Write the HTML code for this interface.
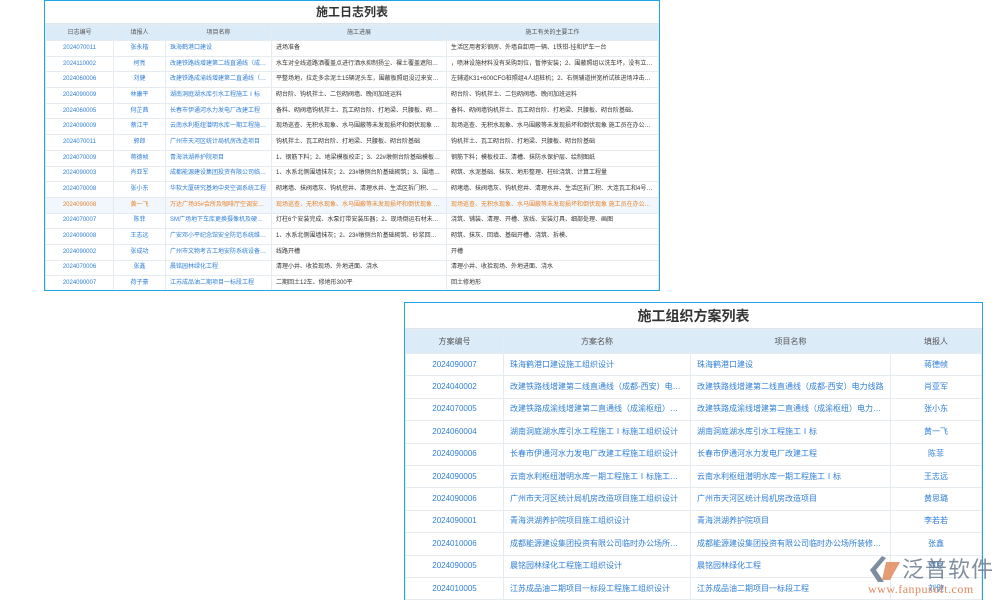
<!DOCTYPE html>
<html><head><meta charset="utf-8"><style>
*{margin:0;padding:0;box-sizing:border-box}
body{width:1000px;height:600px;background:#fff;position:relative;overflow:hidden;font-family:"Liberation Sans","Noto Sans CJK SC",sans-serif}
.t{position:absolute;border:1.5px solid #1fa5e6;background:#fff;overflow:hidden}
table{border-collapse:collapse;width:100%;table-layout:fixed}
td,th{border:1px solid #e6ebf0;white-space:nowrap;overflow:hidden;text-overflow:ellipsis;font-weight:normal;vertical-align:middle}
.title{text-align:center;font-weight:bold;color:#333;border-bottom:1px solid #dde6ee}
th{background:#dcebf8;color:#555}
.b{color:#2f7fd6}
.c{text-align:center}
.g{color:#333}
#t1{left:44px;top:0;width:616px;height:291px}
#t1 .title{height:23px;line-height:23px;font-size:12px}
#t1 th{height:16px;line-height:14px;font-size:6px}
#t1 td{height:15.7px;line-height:13px;font-size:6px;padding:0 4px}
#t1 tr.o td{color:#e8832a;background:#f1f7fd}
#t2{left:404px;top:302px;width:579px;height:298px;border-bottom:none}
#t2 .title{height:26px;line-height:26px;font-size:14px}
#t2 th{height:24px;line-height:20px;font-size:8px}
#t2 td{height:22.4px;line-height:18px;font-size:8px;padding:0 6px}
</style></head><body>
<div class="t" id="t1"><div class="title">施工日志列表</div>
<table><colgroup><col style="width:68px"><col style="width:52px"><col style="width:106px"><col style="width:175px"><col></colgroup>
<tr><th>日志编号</th><th>填报人</th><th>项目名称</th><th>施工进展</th><th>施工有关的主要工作</th></tr>
<tr><td class="b c">2024070011</td><td class="b c">张永楷</td><td class="b">珠海鹤港口建设</td><td class="g">进场准备</td><td class="g">生活区用者彩钢房、外墙自卸用一辆、1铁钳-挂和铲车一台</td></tr>
<tr><td class="b c">2024110002</td><td class="b c">柯亮</td><td class="b">改建铁路线增建第二线直通线（成都-西安）电力线</td><td class="g">水车对全线道路洒覆盖点进行洒水抑制扬尘、裸土覆盖遮阳网：2...</td><td class="g">，喷淋设施材料没有采购到位，暂停安装；2、围蔽照组以洗车坏，没有立柱为腰...</td></tr>
<tr><td class="b c">2024060006</td><td class="b c">刘健</td><td class="b">改建铁路成渝线增建第二直通线（成渝枢纽）</td><td class="g">平整场地，拉走多余泥土15辆泥头车，围蔽板照组没过来安装围蔽...</td><td class="g">左辅道K31+600CFG桩照组4人组桩机；2、右侧辅道拼宽桥试桩进场冲击钻一...</td></tr>
<tr><td class="b c">2024090009</td><td class="b c">林康平</td><td class="b">湖南洞庭湖水库引水工程施工Ⅰ标</td><td class="g">砌台阶、钩机拌土、二包砌阀墙、晚间加班运料</td><td class="g">砌台阶、钩机拌土、二包砌阀墙、晚间加班运料</td></tr>
<tr><td class="b c">2024060005</td><td class="b c">何芷茜</td><td class="b">长春市伊通河水力发电厂改建工程</td><td class="g">备料、砌阀墙钩机拌土、瓦工砌台阶、打地梁、只腰板、砌台阶基...</td><td class="g">备料、砌阀墙钩机拌土、瓦工砌台阶、打地梁、只腰板、砌台阶基础、</td></tr>
<tr><td class="b c">2024090009</td><td class="b c">蔡江平</td><td class="b">云南水利枢纽潜明水库一期工程施工Ⅰ标</td><td class="g">现场巡查、无积水现象、水马围蔽等未发现损坏和倒伏现象 施工...</td><td class="g">现场巡查、无积水现象、水马围蔽等未发现损坏和倒伏现象 施工员在办公室做内...</td></tr>
<tr><td class="b c">2024070011</td><td class="b c">郭郎</td><td class="b">广州市天河区统计局机房改造项目</td><td class="g">钩机拌土、瓦工砌台阶、打地梁、只腰板、砌台阶基础</td><td class="g">钩机拌土、瓦工砌台阶、打地梁、只腰板、砌台阶基础</td></tr>
<tr><td class="b c">2024070009</td><td class="b c">蒋德帧</td><td class="b">青海洪湖养护院项目</td><td class="g">1、钢筋下料；2、地梁模板校正；3、22#墩侧台阶基础模板清理...</td><td class="g">钢筋下料；模板校正、清槽、抹防水保护层、绘制图纸</td></tr>
<tr><td class="b c">2024090003</td><td class="b c">肖亚军</td><td class="b">成都能源建设集团投资有限公司临时办公场所装修</td><td class="g">1、水系北侧围墙抹灰；2、23#墩侧台阶基础砌筑；3、围墙柱砼...</td><td class="g">砌筑、水泥基础、抹灰、地形整理、柱砼浇筑、计算工程量</td></tr>
<tr><td class="b c">2024070008</td><td class="b c">张小东</td><td class="b">华软大厦研究基地中央空调系统工程</td><td class="g">砌堵墙、抹阀墙灰、钩机挖井、清理水井、生活区拆门积、大连瓦...</td><td class="g">砌堵墙、抹阀墙灰、钩机挖井、清理水井、生活区拆门积、大连瓦工和4号楼理石板</td></tr>
<tr class="o"><td class="c">2024090008</td><td class="c">黄一飞</td><td>万达广场35#会所及咖啡厅空调安装工程</td><td>现场巡查、无积水现象、水马围蔽等未发现损坏和倒伏现象 施工...</td><td>现场巡查、无积水现象、水马围蔽等未发现损坏和倒伏现象 施工员在办公室做内...</td></tr>
<tr><td class="b c">2024070007</td><td class="b c">陈菲</td><td class="b">SM广场地下车库更换摄像机及硬盘项目</td><td class="g">灯柱6个安装完成、水泵灯带安装压器；2、现场倒运石材未完成...</td><td class="g">浇筑、铺装、清理、开槽、放线、安装灯具、细部处理、画图</td></tr>
<tr><td class="b c">2024090008</td><td class="b c">王志远</td><td class="b">广安邓小平纪念馆安全防范系统维护项目</td><td class="g">1、水系北侧围墙抹灰；2、23#墩侧台阶基础砌筑、砂浆回填；3...</td><td class="g">砌筑、抹灰、回填、基础开槽、浇筑、拆模、</td></tr>
<tr><td class="b c">2024090002</td><td class="b c">张成功</td><td class="b">广州市文物考古工地安防系统设备保修</td><td class="g">线路开槽</td><td class="g">开槽</td></tr>
<tr><td class="b c">2024070006</td><td class="b c">张鑫</td><td class="b">晨铭园林绿化工程</td><td class="g">清理小井、收拾现场、外地进面、浇水</td><td class="g">清理小井、收拾现场、外地进面、浇水</td></tr>
<tr><td class="b c">2024090007</td><td class="b c">荷子豪</td><td class="b">江苏成品油二期项目一标段工程</td><td class="g">二期回土12车、修地形300平</td><td class="g">回土修地形</td></tr>
</table></div>

<div class="t" id="t2"><div class="title">施工组织方案列表</div>
<table><colgroup><col style="width:98px"><col style="width:187px"><col style="width:200px"><col></colgroup>
<tr><th>方案编号</th><th>方案名称</th><th>项目名称</th><th>填报人</th></tr>
<tr><td class="b c">2024090007</td><td class="b">珠海鹤港口建设施工组织设计</td><td class="b">珠海鹤港口建设</td><td class="b c">蒋德帧</td></tr>
<tr><td class="b c">2024040002</td><td class="b">改建铁路线增建第二线直通线（成都-西安）电力线</td><td class="b">改建铁路线增建第二线直通线（成都-西安）电力线路</td><td class="b c">肖亚军</td></tr>
<tr><td class="b c">2024070005</td><td class="b">改建铁路成渝线增建第二直通线（成渝枢纽）电力线</td><td class="b">改建铁路成渝线增建第二直通线（成渝枢纽）电力线路</td><td class="b c">张小东</td></tr>
<tr><td class="b c">2024060004</td><td class="b">湖南洞庭湖水库引水工程施工Ⅰ标施工组织设计</td><td class="b">湖南洞庭湖水库引水工程施工Ⅰ标</td><td class="b c">黄一飞</td></tr>
<tr><td class="b c">2024090006</td><td class="b">长春市伊通河水力发电厂改建工程施工组织设计</td><td class="b">长春市伊通河水力发电厂改建工程</td><td class="b c">陈菲</td></tr>
<tr><td class="b c">2024090005</td><td class="b">云南水利枢纽潜明水库一期工程施工Ⅰ标施工组织</td><td class="b">云南水利枢纽潜明水库一期工程施工Ⅰ标</td><td class="b c">王志远</td></tr>
<tr><td class="b c">2024090006</td><td class="b">广州市天河区统计局机房改造项目施工组织设计</td><td class="b">广州市天河区统计局机房改造项目</td><td class="b c">黄思璐</td></tr>
<tr><td class="b c">2024090001</td><td class="b">青海洪湖养护院项目施工组织设计</td><td class="b">青海洪湖养护院项目</td><td class="b c">李若若</td></tr>
<tr><td class="b c">2024010006</td><td class="b">成都能源建设集团投资有限公司临时办公场所装修</td><td class="b">成都能源建设集团投资有限公司临时办公场所装修工程</td><td class="b c">张鑫</td></tr>
<tr><td class="b c">2024090005</td><td class="b">晨铭园林绿化工程施工组织设计</td><td class="b">晨铭园林绿化工程</td><td class="b c">谭思</td></tr>
<tr><td class="b c">2024010005</td><td class="b">江苏成品油二期项目一标段工程施工组织设计</td><td class="b">江苏成品油二期项目一标段工程</td><td class="b c">刘健</td></tr>
</table></div>

<div style="position:absolute;left:868px;top:552px;width:130px;height:46px;pointer-events:none">
<svg width="36" height="30" style="position:absolute;left:0;top:2px" viewBox="0 0 36 30"><path d="M14 2 L2 16 L10 28 L16 28 L8 16 L18 4 Z" fill="#7d8da0"/><path d="M18 8 L32 8 L22 26 L14 26 Z" fill="#e08a5a" opacity=".85"/></svg>
<div style="position:absolute;left:34px;top:0;font-size:22px;color:#6d7c8e;letter-spacing:1px;font-family:'Noto Sans CJK SC',sans-serif;opacity:.85">泛普软件</div>
<div style="position:absolute;left:0;top:30px;font-size:12px;color:#e0895a;font-family:'Liberation Serif',serif;letter-spacing:.5px">www.fanpusoft.com</div>
</div>
</body></html>
